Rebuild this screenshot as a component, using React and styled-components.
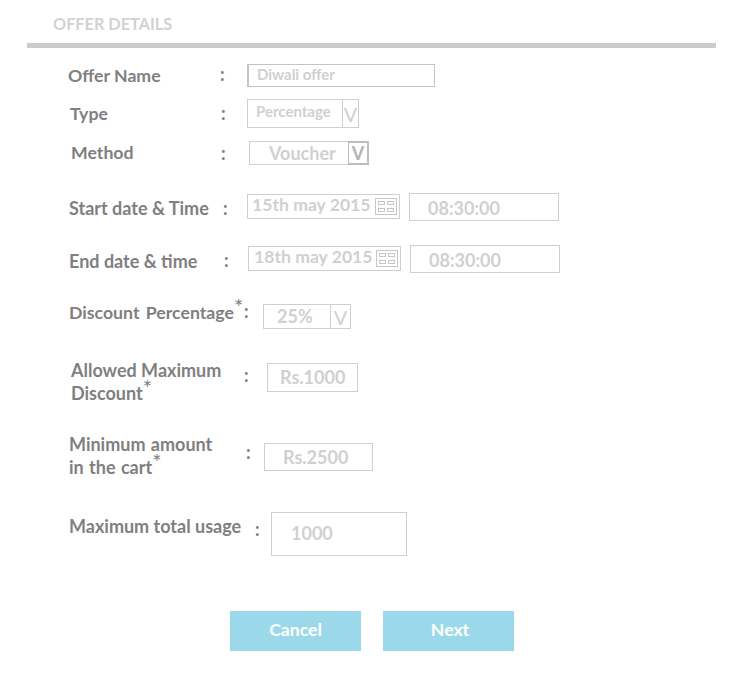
import React from 'react';
import styled, { createGlobalStyle } from 'styled-components';

const GlobalStyle = createGlobalStyle`
  html, body { margin: 0; padding: 0; background: #fff; }
  body { font-family: "Lato", "Open Sans", "Liberation Sans", sans-serif; }
`;

const Page = styled.div`
  width: 742px;
  height: 696px;
  overflow: hidden;
  padding-top: 14px;
  box-sizing: border-box;
`;

const Title = styled.h1`
  margin: 0 0 0 53px;
  font-size: 16.3px;
  line-height: 20px;
  font-weight: 700;
  color: #d2d2d2;
`;

const Rule = styled.div`
  width: 689px;
  height: 5px;
  margin: 9px 0 0 27px;
  background: #cccccc;
`;

const Form = styled.div`
  display: flex;
  flex-direction: column;
`;

const Row = styled.div`
  display: flex;
  align-items: flex-start;
  height: ${p => p.$h}px;
  margin-top: ${p => p.$mt}px;
  padding-left: ${p => p.$x}px;
`;

const Label = styled.div`
  width: ${p => p.$w}px;
  margin-top: ${p => p.$dy || 0}px;
  font-size: ${p => p.$size || 17.7}px;
  line-height: 23px;
  font-weight: 700;
  color: #7f7f7f;
  white-space: pre;
  word-spacing: ${p => p.$wordGap || 0}px;
  flex: none;
`;

/* sits over the end of the label, so it must not stretch the line box */
const Star = styled.span`
  position: relative;
  top: -4px;
  font-size: 22px;
  line-height: 0;
  font-weight: 400;
`;

const Colon = styled.div`
  width: ${p => p.$w}px;
  margin-top: ${p => p.$dy || 0}px;
  font-size: 18px;
  line-height: 23px;
  font-weight: 700;
  color: #7f7f7f;
  flex: none;
`;

const Field = styled.div`
  display: flex;
  align-items: center;
  flex: none;
  box-sizing: border-box;
  width: ${p => p.$w}px;
  height: ${p => p.$h}px;
  margin-top: ${p => p.$dy || 0}px;
  margin-left: ${p => p.$ml || 0}px;
  padding-left: ${p => p.$pad || 0}px;
  border: 1px solid #cfcfcf;
  border-left-width: ${p => p.$thickLeft ? 2 : 1}px;
  border-color: ${p => p.$dark ? '#c4c4c4' : '#cfcfcf'};
  font-size: ${p => p.$size || 18}px;
  font-weight: 700;
  color: #d0d0d0;
  white-space: nowrap;
`;

const FieldText = styled.span`
  flex: 1;
  margin-top: ${p => p.$dy || 0}px;
`;

const Arrow = styled.span`
  flex: none;
  box-sizing: border-box;
  width: ${p => p.$w}px;
  align-self: stretch;
  display: flex;
  align-items: center;
  justify-content: center;
  border-left: 1px solid #cfcfcf;
  font-size: ${p => p.$bold ? 18 : 20}px;
  font-weight: ${p => p.$bold ? 700 : 400};
  color: ${p => p.$bold ? '#b4b4b4' : '#cfcfcf'};
  ${p => p.$bold && 'border: 2px solid #bdbdbd; border-left-width: 1px; margin: -1px -1px -1px 0;'}
`;

const CalendarBox = styled.svg`
  flex: none;
  width: 22px;
  height: 17px;
  margin-right: 2px;
`;

const Actions = styled.div`
  display: flex;
  gap: 22px;
  margin: 55px 0 0 230px;
`;

const Button = styled.button`
  width: 131px;
  height: 40px;
  padding: 0 0 3px ${p => p.$shift || 0}px;
  border: 0;
  background: #9bd9ea;
  color: #fff;
  font-family: inherit;
  font-size: 17.6px;
  font-weight: 700;
`;

const CalendarIcon = () => (
  <CalendarBox viewBox="0 0 22 17" fill="none" stroke="#c6c6c6">
    <rect x="0.5" y="0.5" width="21" height="16" />
    <rect x="3.5" y="3.5" width="6" height="3" />
    <rect x="12.5" y="3.5" width="6" height="3" />
    <rect x="3.5" y="10.5" width="6" height="3" />
    <rect x="12.5" y="10.5" width="6" height="3" />
  </CalendarBox>
);

export default function App() {
  return (
    <Page>
      <GlobalStyle />
      <Title>OFFER DETAILS</Title>
      <Rule />
      <Form>
        <Row $mt={16} $h={24} $x={68}>
          <Label $w={152}>Offer Name</Label>
          <Colon $w={27} $dy={-1}>:</Colon>
          <Field $w={188} $h={23} $pad={8} $size={15} $thickLeft $dark>
            <FieldText $dy={-4}>Diwali offer</FieldText>
          </Field>
        </Row>
        <Row $mt={11} $h={29} $x={70}>
          <Label $w={151} $dy={3}>Type</Label>
          <Colon $w={26} $dy={3}>:</Colon>
          <Field $w={112} $h={29} $pad={8} $size={15}>
            <FieldText $dy={-5}>Percentage</FieldText>
            <Arrow $w={16}>V</Arrow>
          </Field>
        </Row>
        <Row $mt={13} $h={24} $x={71}>
          <Label $w={150}>Method</Label>
          <Colon $w={28} $dy={1}>:</Colon>
          <Field $w={120} $h={24} $pad={19}>
            <FieldText $dy={-1}>Voucher</FieldText>
            <Arrow $w={21} $bold>V</Arrow>
          </Field>
        </Row>
        <Row $mt={28} $h={28} $x={69}>
          <Label $w={154} $dy={4} $size={18}>Start date &amp; Time</Label>
          <Colon $w={24} $dy={4}>:</Colon>
          <Field $w={153} $h={25} $dy={1} $pad={4} $size={17.6}>
            <FieldText $dy={-4}>15th may 2015</FieldText>
            <CalendarIcon />
          </Field>
          <Field $w={150} $h={28} $ml={9} $pad={18}>
            <FieldText $dy={1}>08:30:00</FieldText>
          </Field>
        </Row>
        <Row $mt={24} $h={28} $x={69}>
          <Label $w={155} $dy={5} $size={18}>End date &amp; time</Label>
          <Colon $w={24} $dy={4}>:</Colon>
          <Field $w={153} $h={25} $dy={1} $pad={5} $size={17.6}>
            <FieldText $dy={-4}>18th may 2015</FieldText>
            <CalendarIcon />
          </Field>
          <Field $w={150} $h={28} $ml={9} $pad={18}>
            <FieldText $dy={1}>08:30:00</FieldText>
          </Field>
        </Row>
        <Row $mt={31} $h={25} $x={69}>
          <Label $w={175} $dy={-3} $wordGap={2}>Discount Percentage<Star>*</Star></Label>
          <Colon $w={19} $dy={-4}>:</Colon>
          <Field $w={88} $h={25} $pad={13}>
            <FieldText $dy={-1}>25%</FieldText>
            <Arrow $w={20}>V</Arrow>
          </Field>
        </Row>
        <Row $mt={31} $h={46} $x={71}>
          <Label $w={173} $dy={-1} $size={18}>{'Allowed Maximum\nDiscount'}<Star>*</Star></Label>
          <Colon $w={23} $dy={4}>:</Colon>
          <Field $w={91} $h={29} $dy={3} $pad={12}>
            <FieldText $dy={-1}>Rs.1000</FieldText>
          </Field>
        </Row>
        <Row $mt={28} $h={46} $x={69}>
          <Label $w={177} $dy={-1} $size={18} $wordGap={1}>{'Minimum amount\nin the cart'}<Star>*</Star></Label>
          <Colon $w={18} $dy={7}>:</Colon>
          <Field $w={109} $h={28} $dy={9} $pad={18}>
            <FieldText $dy={-1}>Rs.2500</FieldText>
          </Field>
        </Row>
        <Row $mt={32} $h={44} $x={69}>
          <Label $w={186} $dy={3} $size={18}>Maximum total usage</Label>
          <Colon $w={16} $dy={6}>:</Colon>
          <Field $w={136} $h={44} $pad={19}>
            <FieldText $dy={-3}>1000</FieldText>
          </Field>
        </Row>
      </Form>
      <Actions>
        <Button>Cancel</Button>
        <Button $shift={3}>Next</Button>
      </Actions>
    </Page>
  );
}
